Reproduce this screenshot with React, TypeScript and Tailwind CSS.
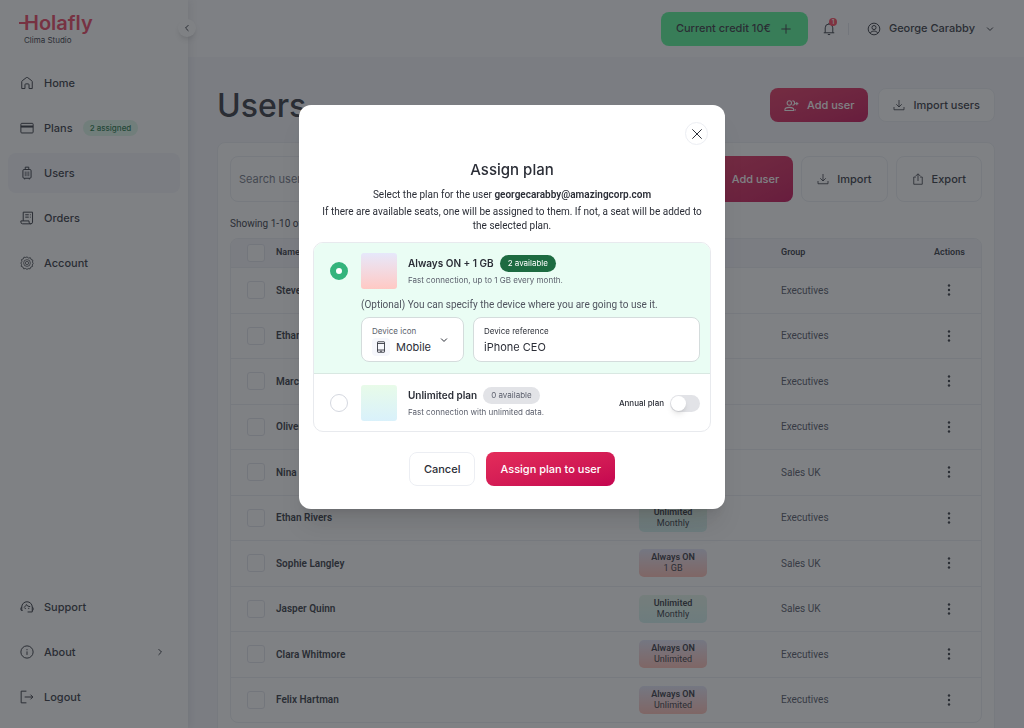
import { useState, type ReactNode } from "react";
import clsx from "clsx";

const users = [
  { name: "Steven", plan: "Unlimited", type: "Monthly", group: "Executives" },
  { name: "Ethan", plan: "Always ON", type: "1 GB", group: "Executives" },
  { name: "Marcus", plan: "Unlimited", type: "Monthly", group: "Executives" },
  { name: "Oliver", plan: "Always ON", type: "1 GB", group: "Executives" },
  { name: "Nina", plan: "Always ON", type: "1 GB", group: "Sales UK" },
  { name: "Ethan Rivers", plan: "Unlimited", type: "Monthly", group: "Executives" },
  { name: "Sophie Langley", plan: "Always ON", type: "1 GB", group: "Sales UK" },
  { name: "Jasper Quinn", plan: "Unlimited", type: "Monthly", group: "Sales UK" },
  { name: "Clara Whitmore", plan: "Always ON", type: "Unlimited", group: "Executives" },
  { name: "Felix Hartman", plan: "Always ON", type: "Unlimited", group: "Executives" },
];

function Icon({ children, className = "size-3.5" }: { children: ReactNode; className?: string }) {
  return (
    <svg
      viewBox="0 0 24 24"
      fill="none"
      stroke="currentColor"
      strokeWidth="1.7"
      aria-hidden="true"
      className={clsx("shrink-0", className)}
    >
      {children}
    </svg>
  );
}

const HomeIcon = () => (
  <Icon>
    <path d="M3 21.5V9.8a2 2 0 0 1 .8-1.6l7-5.4a2 2 0 0 1 2.4 0l7 5.4a2 2 0 0 1 .8 1.6v11.7h-5.5v-6.5a1.5 1.5 0 0 0-1.5-1.5h-4a1.5 1.5 0 0 0-1.5 1.5v6.5z" />
  </Icon>
);

const CardIcon = () => (
  <Icon>
    <rect x="1.5" y="4" width="21" height="16.5" rx="1.5" />
    <path d="M1.5 9.5h21" strokeWidth="3.5" />
  </Icon>
);

const LuggageIcon = () => (
  <Icon>
    <rect x="5" y="6" width="14" height="15" rx="2" />
    <path d="M9 6V2h6v4M8 21v2M16 21v2" />
    <path d="M9 9.5v8M12 9.5v8M15 9.5v8" strokeWidth="1.2" />
  </Icon>
);

const ReceiptIcon = () => (
  <Icon>
    <path d="M5.5 17V2h16v17a3 3 0 0 1-3 3h-14a3 3 0 0 1-3-3v-2h14v2a3 3 0 0 0 3 3" />
    <path d="M9 6.5h6M9 10.5h6M17 6.5h1.5M17 10.5h1.5" />
  </Icon>
);

const GearIcon = () => (
  <Icon>
    <path
      d="M12 1.5l2.6 2 3.3-.5 1.1 3 3 1.1-.5 3.3 1 2.6-1.5 2.4.5 2.5-3 1.1-1.2 3-3.2-.4-2.1 1.4-2.6-1.6-3.1.6-1.2-3-3-1.2.5-3.2L1.5 12l1.7-2.6L2.6 6.1l3-1.1 1.1-3 3.2.5z"
      strokeWidth="1.4"
      strokeLinejoin="round"
    />
    <circle cx="12" cy="12" r="5.8" strokeWidth="1.2" />
    <circle cx="12" cy="12" r="2.8" strokeWidth="1.2" />
  </Icon>
);

const SupportIcon = () => (
  <Icon>
    <path d="M3 18v-6a9 9 0 0 1 18 0v8.5h-8" />
    <path d="M3 12.5a1.5 1.5 0 0 0-1.5 1.5v2.5A1.5 1.5 0 0 0 3 18h1.5M21 12.5a1.5 1.5 0 0 1 1.5 1.5v2.5A1.5 1.5 0 0 1 21 18" />
    <path d="M6.5 12.5c2.5-.8 4-2.7 4.5-4.8 1.4 2.4 3.5 3.6 6.5 3.6" />
    <path d="M9 13.5v2M15 13.5v2" />
  </Icon>
);

const InfoIcon = () => (
  <Icon>
    <circle cx="12" cy="12" r="10.5" />
    <path d="M12 11v6M12 7v2" />
  </Icon>
);

const LogoutIcon = () => (
  <Icon>
    <path d="M11 2H2v20h9M8 12h14M18 8l4 4-4 4" />
  </Icon>
);

const ChevronIcon = ({ className }: { className?: string }) => (
  <Icon className={clsx("size-2.5", className)}>
    <path d="M5 8.5l7 7 7-7" strokeWidth="2.4" />
  </Icon>
);

const DownloadIcon = () => (
  <Icon className="size-3">
    <path d="M12 2v14M6.5 10.5L12 16l5.5-5.5M2 16v5.5h20V16" />
  </Icon>
);

const ExportIcon = () => (
  <Icon className="size-3">
    <path d="M8 8H3.5v14.5h17V8H16M12 16V2M7.5 6L12 1.5 16.5 6" />
  </Icon>
);

const AddUserIcon = () => (
  <Icon className="size-[15px]">
    <circle cx="8.5" cy="8" r="3.5" />
    <path d="M1.5 20v-1.5c0-2.5 4-3.5 7-3.5s7 1 7 3.5V20zM13.5 4.5a3.5 3.5 0 0 1 0 7M18 20v-2M20.5 6.5v5M18 9h5" />
  </Icon>
);

const navItem = "flex h-10 items-center gap-2.5 rounded-lg px-3 text-[11px] font-medium";
const outlineButton = "flex items-center justify-center gap-2 rounded-lg border border-[#eceef3] bg-white text-[11px] font-medium";
const redButton = "flex items-center justify-center gap-2 rounded-lg bg-linear-to-br from-[#e42c5a] to-[#c40450] text-[11px] font-medium text-white";

function Sidebar() {
  return (
    <aside className="relative z-10 flex w-[188px] shrink-0 flex-col bg-white px-2 pt-3 pb-[11px] shadow-[2px_0_8px_rgba(40,44,60,0.1)]">
      <div className="h-[51px] pl-4">
        <div className="relative w-fit text-xl leading-[22px] font-semibold text-[#ea3a5b]">
          Holafly
          <span className="absolute top-[10px] -left-[5px] h-[2px] w-[9px] bg-[#ea3a5b]" />
        </div>
        <p className="text-[8px] leading-3">Clima Studio</p>
      </div>

      <button
        aria-label="Collapse sidebar"
        className="absolute top-[19px] -right-2 flex size-[18px] items-center justify-center rounded-full bg-white shadow-md"
      >
        <ChevronIcon className="rotate-90" />
      </button>

      <nav className="flex flex-1 flex-col gap-[5px]">
        <a href="#home" className={navItem}>
          <HomeIcon />
          Home
        </a>
        <a href="#plans" className={navItem}>
          <CardIcon />
          Plans
          <span className="rounded-full bg-[#dcf8e8] px-[7px] text-[8px] leading-4 text-[#14703f]">2 assigned</span>
        </a>
        <a href="#users" className={clsx(navItem, "bg-[#f4f5fb]")}>
          <LuggageIcon />
          Users
        </a>
        <a href="#orders" className={navItem}>
          <ReceiptIcon />
          Orders
        </a>
        <a href="#account" className={navItem}>
          <GearIcon />
          Account
        </a>
        <a href="#support" className={clsx(navItem, "mt-auto")}>
          <SupportIcon />
          Support
        </a>
        <a href="#about" className={navItem}>
          <InfoIcon />
          About
          <ChevronIcon className="mr-[3px] ml-auto -rotate-90" />
        </a>
        <a href="#logout" className={navItem}>
          <LogoutIcon />
          Logout
        </a>
      </nav>
    </aside>
  );
}

function Header() {
  return (
    <header className="flex h-[57px] items-center justify-end bg-[#fcfcfe] pr-[29px]">
      <button className="flex h-[34px] items-center gap-2 rounded-lg bg-[#4ff592] px-[15px] text-[11px] font-medium">
        Current credit 10€
        <Icon>
          <path d="M12 4v16M4 12h16" />
        </Icon>
      </button>
      <button aria-label="Notifications" className="relative ml-3.5">
        <Icon>
          <path d="M3 18.5h18M5.5 18.5V10a6.5 6.5 0 0 1 13 0v8.5M12 1.5v2M10 21.5h4" />
        </Icon>
        <span className="absolute -top-1 -right-px size-2 rounded-full bg-[#ff3b55] text-center text-[6px] leading-2 font-semibold text-white">1</span>
      </button>
      <span className="mx-3 h-3 w-px bg-[#e2e4ec]" />
      <button className="ml-1.5 flex items-center gap-2 text-[11px] font-medium">
        <Icon>
          <circle cx="12" cy="12" r="10" />
          <circle cx="12" cy="9.5" r="3.5" />
          <path d="M5.5 19c1.5-2.5 4-3.5 6.5-3.5s5 1 6.5 3.5" />
        </Icon>
        George Carabby
        <ChevronIcon className="ml-0.5" />
      </button>
    </header>
  );
}

function UsersTable() {
  return (
    <div className="overflow-hidden rounded-lg border border-[#eceef3]">
      <table className="w-full table-fixed text-left font-[Roboto,sans-serif] text-[10px]">
        <colgroup>
          <col className="w-[45px]" />
          <col />
          <col className="w-[142px]" />
          <col className="w-[153px]" />
          <col className="w-[47px]" />
        </colgroup>
        <thead className="bg-[#f4f5fb] text-[9px]">
          <tr className="h-7">
            <th className="pl-4">
              <input type="checkbox" aria-label="Select all users" className="block size-[18px] appearance-none rounded-[3px] border border-[#e2e4ec] bg-white" />
            </th>
            <th className="font-semibold">Name</th>
            <th className="font-semibold">Plan</th>
            <th className="font-semibold">Group</th>
            <th className="font-semibold">Actions</th>
          </tr>
        </thead>
        <tbody>
          {users.map((user) => (
            <tr key={user.name} className="h-[45px] border-t border-[#eceef3] odd:h-[46px]">
              <td className="pl-4">
                <input type="checkbox" aria-label={`Select ${user.name}`} className="block size-[18px] appearance-none rounded-[3px] border border-[#e2e4ec]" />
              </td>
              <td className="font-semibold">{user.name}</td>
              <td>
                <div
                  className={clsx(
                    "h-7 w-[68px] rounded-[5px] bg-linear-to-b pt-[3px] text-center text-[9px] leading-[11px]",
                    user.plan === "Unlimited" ? "from-[#e6f7ea] to-[#d2f2ef]" : "from-[#e4e6fa] to-[#ffbcb2]",
                  )}
                >
                  <p className="font-semibold">{user.plan}</p>
                  <p>{user.type}</p>
                </div>
              </td>
              <td className="text-[#4c5060]">{user.group}</td>
              <td>
                <button aria-label={`Actions for ${user.name}`} className="flex w-[30px] justify-center">
                  <svg viewBox="0 0 4 12" fill="currentColor" className="h-3 w-1">
                    <circle cx="2" cy="1.5" r="1.2" />
                    <circle cx="2" cy="6" r="1.2" />
                    <circle cx="2" cy="10.5" r="1.2" />
                  </svg>
                </button>
              </td>
            </tr>
          ))}
        </tbody>
      </table>
    </div>
  );
}

function AssignPlanModal() {
  const [plan, setPlan] = useState("always-on");
  const radio = "size-[18px] shrink-0 appearance-none rounded-full border border-[#d5d8e0] bg-white checked:border-[6px] checked:border-[#34b47c]";

  return (
    <div className="fixed inset-0 z-20 flex items-start justify-center bg-[#2a2d32]/60 pt-[105px]">
      <div
        role="dialog"
        aria-modal="true"
        aria-labelledby="assign-title"
        className="w-full max-w-[426px] rounded-xl bg-white px-3.5 pt-[17px] pb-[23px] text-center shadow-xl"
      >
        <div className="flex justify-end pr-[3px]">
          <button aria-label="Close" className="flex size-[23px] items-center justify-center rounded-full border border-[#eceef3]">
            <Icon>
              <path d="M4 4l16 16M20 4L4 20" />
            </Icon>
          </button>
        </div>

        <h2 id="assign-title" className="mt-[15px] text-[15px] leading-5 font-medium">
          Assign plan
        </h2>
        <div className="mt-2 flex flex-col gap-[3px] px-1.5 font-[Roboto,sans-serif] text-[10px] leading-3.5">
          <p>
            Select the plan for the user <strong className="font-semibold">georgecarabby@amazingcorp.com</strong>
          </p>
          <p>
            If there are available seats, one will be assigned to them. If not, a seat will be added to the selected
            plan.
          </p>
        </div>

        <div className="mt-[9px] overflow-hidden rounded-[10px] border border-[#e8eaee] text-left">
          <div className="border-b border-[#d9e8e2] bg-[#eafdf4] pt-2.5 pr-2.5 pb-[11px] pl-4">
            <label className="flex items-center gap-[13px]">
              <input
                type="radio"
                name="plan"
                className={radio}
                checked={plan === "always-on"}
                onChange={() => setPlan("always-on")}
              />
              <span className="size-9 rounded-[3px] bg-linear-to-b from-[#e6e8fb] to-[#ffc9c4]" />
              <span className="-ml-0.5 flex flex-col">
                <span className="flex items-center gap-1.5 text-[10px] font-semibold">
                  Always ON + 1 GB
                  <span className="rounded-full bg-[#1d6b41] px-2 text-[8px] leading-[17px] font-normal text-white">2 available</span>
                </span>
                <span className="text-[8px] leading-4 text-[#5b5f6c]">Fast connection, up to 1 GB every month.</span>
              </span>
            </label>

            <div className="pl-[31px]">
              <p className="mt-2 font-[Roboto,sans-serif] text-[10px] leading-4 text-[#50545f]">
                (Optional) You can specify the device where you are going to use it.
              </p>
              <div className="mt-1 flex gap-[9px]">
                <div className="relative w-[103px] rounded-lg border border-[#d4dcdc] bg-white pt-[7px] pl-2.5">
                  <label htmlFor="device-icon" className="block text-[8px] leading-3 text-[#5b5f6c]">
                    Device icon
                  </label>
                  <div className="flex items-center">
                    <span className="flex size-[18px] items-center justify-center rounded bg-[#f6f7fc]">
                      <Icon className="size-3">
                        <rect x="5" y="1.5" width="14" height="21" rx="1" />
                        <path d="M5 5h14M5 18h14M10 20.5h4" />
                      </Icon>
                    </span>
                    <select id="device-icon" className="w-16 appearance-none bg-transparent pl-1.5 text-[11px] leading-5">
                      <option>Mobile</option>
                      <option>Laptop</option>
                    </select>
                  </div>
                  <ChevronIcon className="pointer-events-none absolute top-[17px] right-3.5" />
                </div>
                <div className="min-w-0 flex-1 rounded-lg border border-[#d4dcdc] bg-white px-2.5 pt-[7px] pb-1">
                  <label htmlFor="device-ref" className="block text-[8px] leading-3">
                    Device reference
                  </label>
                  <input id="device-ref" defaultValue="iPhone CEO" className="block w-full text-[11px] leading-5 outline-none" />
                </div>
              </div>
            </div>
          </div>

          <div className="flex items-center pt-[11px] pr-2.5 pb-2.5 pl-4">
            <label className="flex flex-1 items-center gap-[13px]">
              <input
                type="radio"
                name="plan"
                className={radio}
                checked={plan === "unlimited"}
                onChange={() => setPlan("unlimited")}
              />
              <span className="size-9 rounded-[3px] bg-linear-to-b from-[#e8fbe9] to-[#d9f1fb]" />
              <span className="-ml-0.5 flex flex-col">
                <span className="flex items-center gap-1.5 text-[10px] font-semibold">
                  Unlimited plan
                  <span className="rounded-full bg-[#e2e3e7] px-2 text-[8px] leading-[17px] font-normal text-[#5b5f6c]">0 available</span>
                </span>
                <span className="text-[8px] leading-4 text-[#5b5f6c]">Fast connection with unlimited data.</span>
              </span>
            </label>
            <label className="flex items-center gap-1.5 text-[8px] font-medium">
              Annual plan
              <input
                type="checkbox"
                role="switch"
                className="flex h-[17px] w-[30px] appearance-none items-center rounded-full bg-[#e2e3e7] px-px before:size-[15px] before:rounded-full before:bg-white before:shadow-md checked:justify-end checked:bg-[#34b47c]"
              />
            </label>
          </div>
        </div>

        <div className="mt-5 flex justify-center gap-[11px]">
          <button className={clsx(outlineButton, "h-[34px] px-3.5")}>Cancel</button>
          <button className={clsx(redButton, "h-[34px] px-3.5")}>Assign plan to user</button>
        </div>
      </div>
    </div>
  );
}

export default function App() {
  return (
    <div className="flex h-screen overflow-hidden bg-[#f5f6fb] font-[Inter,sans-serif] text-[#2b2e37]">
      <Sidebar />

      <div className="min-w-0 flex-1">
        <Header />
        <main className="px-[29px] pt-[31px]">
          <div className="flex h-[34px] items-center justify-between">
            <h1 className="pt-0.5 text-[32px] leading-[34px] font-medium">Users</h1>
            <div className="flex gap-2.5">
              <button className={clsx(redButton, "h-[34px] px-3.5")}>
                <AddUserIcon />
                Add user
              </button>
              <button className={clsx(outlineButton, "h-[34px] px-3.5")}>
                <DownloadIcon />
                Import users
              </button>
            </div>
          </div>

          <section className="mt-5 rounded-lg border border-[#eceef3] bg-white px-3 py-[13px]">
            <div className="flex gap-2">
              <input
                type="search"
                aria-label="Search users"
                placeholder="Search users"
                className="h-[46px] min-w-0 flex-1 rounded-lg border border-[#eceef3] px-2 text-[11px] placeholder:text-[#6d7180]"
              />
              <button className={clsx(redButton, "h-[46px] px-3.5")}>
                <AddUserIcon />
                Add user
              </button>
              <button className={clsx(outlineButton, "h-[46px] px-[15px]")}>
                <DownloadIcon />
                Import
              </button>
              <button className={clsx(outlineButton, "h-[46px] px-[15px]")}>
                <ExportIcon />
                Export
              </button>
            </div>
            <p className="mt-[15px] mb-[7px] font-[Roboto,sans-serif] text-[10px] leading-3.5">Showing 1-10 of 10</p>
            <UsersTable />
          </section>
        </main>
      </div>

      <AssignPlanModal />
    </div>
  );
}
